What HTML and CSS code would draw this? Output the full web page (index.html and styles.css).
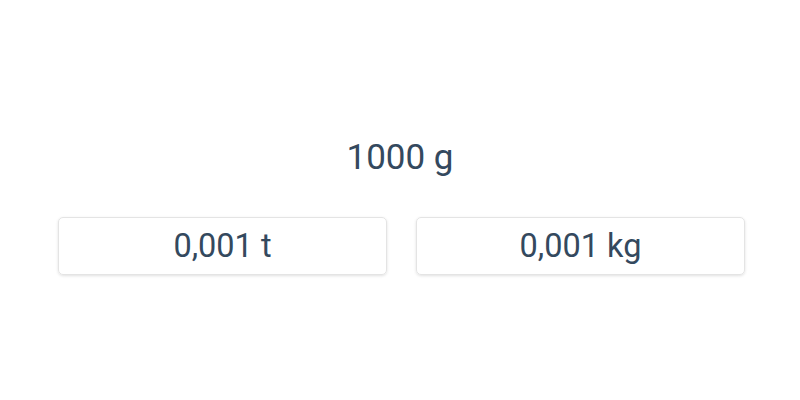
FILE: index.html
```html
<!DOCTYPE html>
<html>
<head>
<meta charset="utf-8">
<link rel="stylesheet" href="styles.css">
</head>
<body>
<div class="app">
  <div class="title">1000 g</div>
  <div class="row">
    <div class="card">0,001 t</div>
    <div class="card">0,001 kg</div>
  </div>
</div>
</body>
</html>
```

FILE: styles.css
```css
html, body {
  margin: 0;
  padding: 0;
  background: #ffffff;
}
.app {
  width: 800px;
  height: 400px;
  box-sizing: border-box;
  padding: 136px 55px 0 58px;
  font-family: Roboto, "Liberation Sans", sans-serif;
  color: #34495e;
}
.title {
  text-align: center;
  font-size: 35px;
  line-height: 44px;
  margin-right: 3px;
}
.row {
  display: grid;
  grid-template-columns: 1fr 1fr;
  gap: 29px;
  margin-top: 37px;
}
.card {
  height: 58px;
  box-sizing: border-box;
  border-radius: 5px;
  border: 1px solid #e4e4e4;
  box-shadow: 0 1px 3px rgba(0,0,0,0.12);
  display: flex;
  align-items: center;
  justify-content: center;
  font-size: 32.5px;
}
```
